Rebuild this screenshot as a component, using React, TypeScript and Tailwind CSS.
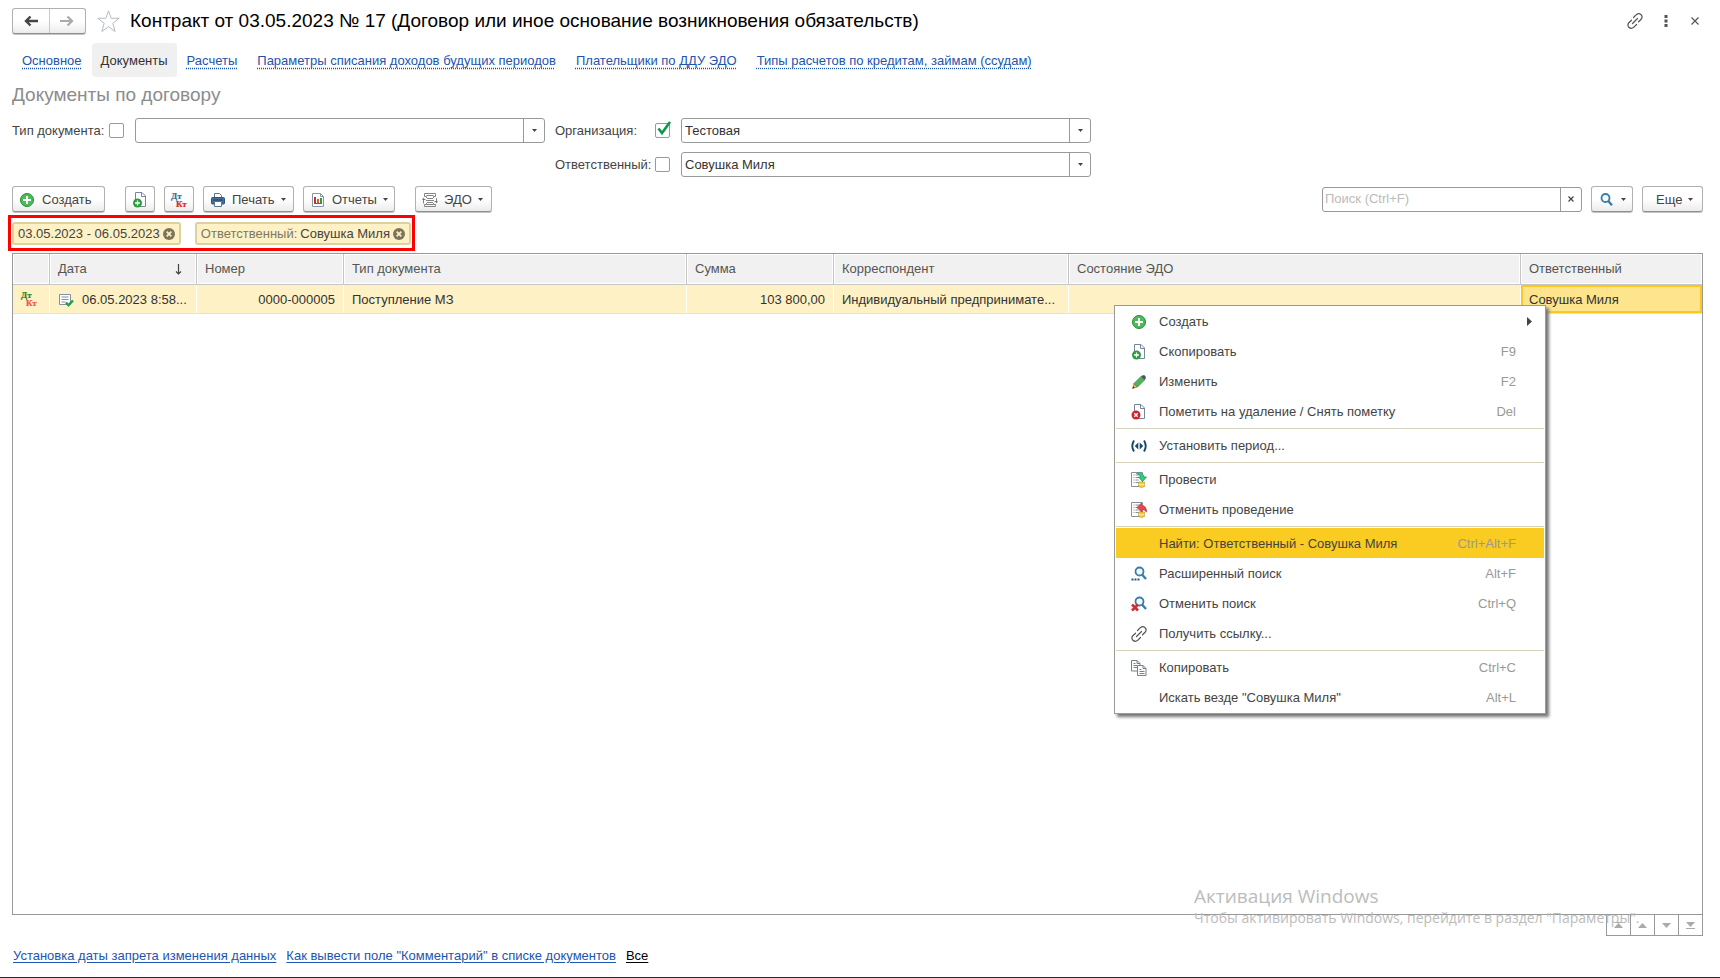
import React from 'react';

const CreateIcon = () => (
  <svg className="h-4 w-4 shrink-0" viewBox="0 0 16 16">
    <circle cx="8" cy="8" r="6.5" fill="#4dbb5a" stroke="#1f8f35" />
    <path d="M8 4v8M4 8h8" stroke="#fff" strokeWidth="2" />
  </svg>
);

const PageShape = () => (
  <path d="M3.5 .5H10l3.5 3.500v10.500h-10zM9.500 .5v4h4" fill="#fff" stroke="#76859a" />
);

const CopyDocIcon = () => (
  <svg className="h-4 w-4 shrink-0" viewBox="0 0 16 16">
    <PageShape />
    <circle cx="5.5" cy="11" r="4.5" fill="#2b9b3d" />
    <path d="M5.5 8.5v5M3 11h5" stroke="#fff" strokeWidth="1.3" />
  </svg>
);

const DeleteDocIcon = () => (
  <svg className="h-4 w-4 shrink-0" viewBox="0 0 16 16">
    <PageShape />
    <circle cx="5" cy="11" r="4.5" fill="#cf2430" />
    <path d="M3.3 9.3l3.4 3.4M6.7 9.3l-3.4 3.4" stroke="#fff" strokeWidth="1.3" />
  </svg>
);

const PencilIcon = () => (
  <svg className="h-4 w-4 shrink-0" viewBox="0 0 16 16">
    <path d="M1.5 14.5l1.5-5 3.5 3.5z" fill="#f0b354" stroke="#8a6a3a" strokeWidth=".6" />
    <path d="M1.5 14.5l.7-2.2 1.5 1.5z" fill="#333" />
    <path d="M3 9.5l7-7 3.5 3.5-7 7z" fill="#52b35c" stroke="#347f3e" strokeWidth=".7" />
    <path d="M10 2.5l1.5-1.3h2l1.2 1.3v2l-1.2 1.5z" fill="#44566a" />
  </svg>
);

const PeriodIcon = () => (
  <svg className="h-4 w-4 shrink-0" viewBox="0 0 16 16">
    <path d="M3 2.5q-3.5 5.5 0 11M13 2.5q3.5 5.5 0 11" fill="none" stroke="#16486b" strokeWidth="1.9" />
    <path d="M7.3 4.5v7l-3.5-3.5zM8.7 4.5v7l3.5-3.5z" fill="#16486b" />
  </svg>
);

const PostIcon = ({ undo }: { undo?: boolean }) => (
  <svg className="h-4 w-4 shrink-0" viewBox="0 0 16 16">
    <path d="M.5 .5h11v14H.5z" fill="#fff" stroke="#8492a0" />
    <path d="M2.5 3h1M4.5 3h4M2.5 5.5h1M4.5 5.5h4M2.5 8h1M4.5 8h3M2.5 10.5h1M4.5 10.5h3" stroke="#8492a0" />
    <path d="M7.5 10h6v4.5q-3 1.8-6 0z" fill="#f1cd4a" stroke="#b58f1e" strokeWidth=".6" />
    <path d="M7.5 12.3q3 1.4 6 0" fill="none" stroke="#fff3b0" strokeWidth=".9" />
    {undo ? (
      <path d="M6 5.5L10.5 1v2.5q5 0 5 6.5-1.5-2.7-5-2.5V10z" fill="#e84a4a" stroke="#b72a2f" strokeWidth=".7" />
    ) : (
      <path d="M5.5 1.5q7-1.5 7.5 3.5h2.5L11.5 9.5 7.5 5h2.3q-.5-2.5-4.3-3.5z" fill="#25d47c" stroke="#138f4e" strokeWidth=".7" />
    )}
  </svg>
);

const Lens = () => (
  <>
    <circle cx="8.5" cy="5.5" r="4" fill="#f4fafd" stroke="#3a7ca8" strokeWidth="1.8" />
    <path d="M11.2 8.7l3.8 4.3" stroke="#3a7ca8" strokeWidth="2.4" />
  </>
);

const AdvancedSearchIcon = () => (
  <svg className="h-4 w-4 shrink-0" viewBox="0 0 16 16">
    <Lens />
    <path d="M.5 13.5h8" stroke="#25587a" strokeWidth="2" strokeDasharray="2 1" />
  </svg>
);

const CancelSearchIcon = () => (
  <svg className="h-4 w-4 shrink-0" viewBox="0 0 16 16">
    <Lens />
    <path d="M1 8.5l6 6M7 8.5l-6 6" stroke="#d22d35" strokeWidth="2.6" />
  </svg>
);

const SearchIcon = () => (
  <svg className="h-4 w-4 shrink-0" viewBox="0 0 16 16">
    <circle cx="6.5" cy="6" r="4" fill="#f4fafd" stroke="#3a7ca8" strokeWidth="1.8" />
    <path d="M9.3 9l3.7 4.2" stroke="#3a7ca8" strokeWidth="2.4" />
  </svg>
);

const LinkIcon = () => (
  <svg className="h-4 w-4 shrink-0" viewBox="0 0 16 16" fill="none" stroke="#555" strokeWidth="1.2" strokeLinecap="round">
    <path d="M6.5 4.5l2.8-2.8q2.5-2 4.8 0 2 2.3 0 4.6L11.500 8.800" />
    <path d="M9.5 11.5l-2.8 2.8q-2.500 2-4.800 0-2-2.300 0-4.600L4.500 7.200" />
    <path d="M5.5 10.5l5-5" />
  </svg>
);

const CopyIcon = () => (
  <svg className="h-4 w-4 shrink-0" viewBox="0 0 16 16" fill="#fff" stroke="#74808c">
    <path d="M.5 .5H6l3 3V11H.5zM6 .5v3h3M2.5 3.5h2M2.5 5.5h4M2.5 7.5h4" />
    <path d="M6.5 5.5H12l3 3v7H6.5zM12 5.5v3h3M8.5 9.5h2M8.5 11.5h5M8.5 13.5h5" />
  </svg>
);

const PrintIcon = () => (
  <svg className="h-4 w-4 shrink-0" viewBox="0 0 16 16">
    <path d="M4.5 6V1.5h5l2 2V6" fill="#fff" stroke="#5d7690" />
    <rect x="1.5" y="5.5" width="13" height="6.5" rx="1" fill="#44719c" stroke="#2a527a" />
    <path d="M3 8h10" stroke="#1f3f60" />
    <path d="M4.5 9.5h7v5h-7z" fill="#fff" stroke="#5d7690" />
  </svg>
);

const ReportIcon = () => (
  <svg className="h-4 w-4 shrink-0" viewBox="0 0 16 16">
    <path d="M2.5 1.5h8l3 3v10h-11z" fill="#fff" stroke="#8796a8" />
    <path d="M10.5 1.5v3h3" fill="none" stroke="#8796a8" />
    <path d="M5 5v6" stroke="#c9302c" strokeWidth="2" />
    <path d="M8 7v4" stroke="#e0572c" strokeWidth="2" />
    <path d="M11 6v5" stroke="#2f9a3f" strokeWidth="2" />
    <path d="M4 11.5h8" stroke="#7a5b4a" />
  </svg>
);

const EdoIcon = () => (
  <svg className="h-4 w-4 shrink-0" viewBox="0 0 16 16" fill="none" stroke="#858585">
    <path d="M4.5 6V4.500h-2V1.500h11v3h-2V6M4.500 3.500h7M5 6.500h6M4 8.500h8M5 10.500h6M4.500 11v1.500h-2v2h11v-2h-2V11M4.500 12.500h7" />
    <path d="M1.500 11.500V7.500h2M14.500 6v3.500h-2" />
    <path d="M0 8l1.500-2.500L3 8zM13 9l1.500 2.500L16 9z" fill="#777" stroke="none" />
  </svg>
);

const DtKtIcon = ({ debit, credit }: { debit: string; credit: string }) => (
  <svg className="h-4 w-4 shrink-0 overflow-visible" viewBox="0 0 16 16" fontFamily="Liberation Serif, serif" fontWeight="700" fontSize="9">
    <text x="0" y="7" fill={debit} stroke={debit} strokeWidth=".2">Дт</text>
    <text x="5" y="15" fill={credit} stroke={credit} strokeWidth=".2">Кт</text>
  </svg>
);

const PostedDocIcon = () => (
  <svg className="h-4 w-4 shrink-0" viewBox="0 0 16 16">
    <path d="M1.5 2.5h11v10h-11z" fill="#fff" stroke="#8190a2" />
    <path d="M3.5 5h7M3.5 7.5h7M3.5 10h4" stroke="#8190a2" />
    <path d="M8 10.5l2.5 2.7 4.5-4.7" fill="none" stroke="#25a13b" strokeWidth="2.4" />
  </svg>
);

const Caret = () => (
  <svg className="h-[3px] w-[5px] shrink-0" viewBox="0 0 5 3">
    <path d="M0 0h5L2.5 3z" fill="#444" />
  </svg>
);

const ChipClose = ({ label }: { label: string }) => (
  <button aria-label={label}>
    <svg className="h-3 w-3" viewBox="0 0 12 12">
      <circle cx="6" cy="6" r="6" fill="#7d755a" />
      <path d="M3.7 3.7l4.6 4.6M8.3 3.7L3.7 8.3" stroke="#fdf0c4" strokeWidth="1.7" />
    </svg>
  </button>
);

type ToolButtonProps = {
  icon?: React.ReactNode;
  label?: string;
  title?: string;
  menu?: boolean;
  className: string;
};

const ToolButton: React.FC<ToolButtonProps> = ({ icon, label, title, menu, className }) => (
  <button
    aria-label={title}
    className={`flex h-[26px] items-center rounded-[3px] border border-[#b0b0b0] border-b-[#8f8f8f] bg-gradient-to-b from-white from-50% to-[#ececec] pt-px text-[#444] shadow-[0_1px_0_#c4c4c4] ${className}`}
  >
    {icon}
    {label && <span>{label}</span>}
    {menu && <Caret />}
  </button>
);

type FilterProps = {
  id: string;
  label: string;
  value: string;
  checked?: boolean;
  labelClass: string;
};

const FilterField: React.FC<FilterProps> = ({ id, label, value, checked, labelClass }) => (
  <div className="flex h-[25px] items-center">
    <label htmlFor={id} className={labelClass}>{label}</label>
    <span className="relative flex">
      <input
        type="checkbox"
        aria-label={label}
        defaultChecked={checked}
        className="peer h-[15px] w-[15px] appearance-none rounded-[2px] border border-[#999] bg-white"
      />
      <svg className="pointer-events-none absolute -top-0.5 left-0.5 hidden h-4 w-4 peer-checked:block" viewBox="0 0 16 16">
        <path d="M1.5 7.5L5 12 13 1" fill="none" stroke="#0a9a48" strokeWidth="2.6" />
      </svg>
    </span>
    <div className="relative ml-[11px] flex">
      <select id={id} defaultValue={value} className="h-[25px] w-[410px] appearance-none rounded-[3px] border border-[#999] bg-white pl-[3px] text-[#333]">
        <option>{value}</option>
      </select>
      <span className="pointer-events-none absolute inset-y-0 right-0 flex w-[22px] items-center justify-center border-l border-[#999]">
        <Caret />
      </span>
    </div>
  </div>
);

const tabs = [
  'Основное',
  'Документы',
  'Расчеты',
  'Параметры списания доходов будущих периодов',
  'Плательщики по ДДУ ЭДО',
  'Типы расчетов по кредитам, займам (ссудам)'
];

const columns = [
  { title: '', width: 'w-[37px]' },
  { title: 'Дата', width: 'w-[147px]' },
  { title: 'Номер', width: 'w-[147px]' },
  { title: 'Тип документа', width: 'w-[343px]' },
  { title: 'Сумма', width: 'w-[147px]' },
  { title: 'Корреспондент', width: 'w-[235px]' },
  { title: 'Состояние ЭДО', width: '' },
  { title: 'Ответственный', width: 'w-[181px]' }
];

type MenuItem = {
  label: string;
  icon?: React.ReactNode;
  keys?: string;
  submenu?: boolean;
  active?: boolean;
};

const menuGroups: MenuItem[][] = [
  [
    { label: 'Создать', icon: <CreateIcon />, submenu: true },
    { label: 'Скопировать', icon: <CopyDocIcon />, keys: 'F9' },
    { label: 'Изменить', icon: <PencilIcon />, keys: 'F2' },
    { label: 'Пометить на удаление / Снять пометку', icon: <DeleteDocIcon />, keys: 'Del' }
  ],
  [{ label: 'Установить период...', icon: <PeriodIcon /> }],
  [
    { label: 'Провести', icon: <PostIcon /> },
    { label: 'Отменить проведение', icon: <PostIcon undo /> }
  ],
  [
    { label: 'Найти: Ответственный - Совушка Миля', keys: 'Ctrl+Alt+F', active: true },
    { label: 'Расширенный поиск', icon: <AdvancedSearchIcon />, keys: 'Alt+F' },
    { label: 'Отменить поиск', icon: <CancelSearchIcon />, keys: 'Ctrl+Q' },
    { label: 'Получить ссылку...', icon: <LinkIcon /> }
  ],
  [
    { label: 'Копировать', icon: <CopyIcon />, keys: 'Ctrl+C' },
    { label: 'Искать везде "Совушка Миля"', keys: 'Alt+L' }
  ]
];

const ContextMenu: React.FC = () => (
  <div role="menu" className="absolute top-[51px] right-[156px] z-10 w-[432px] border border-[#999] bg-white px-px pb-px shadow-[3px_3px_3px_#777]">
    {menuGroups.map((group, index) => (
      <div key={index}>
        {index > 0 && (
          <div className="flex h-1 items-center">
            <div className="h-px w-full bg-[#d8d3bd]" />
          </div>
        )}
        {group.map((item) => (
          <button
            key={item.label}
            role="menuitem"
            className={`flex h-[30px] w-full items-center pt-px pr-[12px] pl-[15px] text-left ${item.active ? 'bg-[#facb20]' : ''}`}
          >
            <span className="w-7 shrink-0">{item.icon}</span>
            <span className="flex-1">{item.label}</span>
            <span className="text-[#999]">{item.keys}</span>
            <span className="flex w-4 shrink-0 justify-end">
              {item.submenu && (
                <svg className="h-[9px] w-[5px]" viewBox="0 0 5 9">
                  <path d="M0 0l5 4.5L0 9z" fill="#444" />
                </svg>
              )}
            </span>
          </button>
        ))}
      </div>
    ))}
  </div>
);

const scrollButtons = [
  { name: 'В начало', path: 'M0 0h9v1H0zM4.5 1L9 6H0z' },
  { name: 'Вверх', path: 'M4.5 1L9 6H0z' },
  { name: 'Вниз', path: 'M0 1h9L4.5 6z' },
  { name: 'В конец', path: 'M0 0h9L4.5 5zM0 6h9v1H0z' }
];

const cell = 'truncate border-r border-white px-2 pt-0.5';

const DocumentsTable: React.FC = () => (
  <div className="relative flex-1 border border-[#999]">
    <table className="w-full table-fixed border-separate border-spacing-0">
      <thead>
        <tr className="h-[31px]">
          {columns.map(({ title, width }) => (
            <th
              key={title || 'status'}
              className={`${width} border-r border-b border-[#c6c6c6] bg-[#f1f1f1] px-2 text-left font-normal text-[#555] shadow-[inset_0_0_0_1px_#fff] last:border-r-0`}
            >
              <span className="flex items-center justify-between">
                {title}
                {title === 'Дата' && (
                  <svg className="mr-1.5 h-[11px] w-[7px]" viewBox="0 0 7 11">
                    <path d="M3.5 0v10M1 7.5l2.5 2.5L6 7.5" fill="none" stroke="#444" strokeWidth="1.2" />
                  </svg>
                )}
              </span>
            </th>
          ))}
        </tr>
      </thead>
      <tbody>
        <tr className="h-7 bg-[#fdf1c5] text-[#333]">
          <td className="border-r border-white pl-2">
            <DtKtIcon debit="#2d7d1e" credit="#f2504a" />
          </td>
          <td className={cell}>
            <span className="flex items-center gap-2">
              <PostedDocIcon />
              <span className="truncate">06.05.2023 8:58...</span>
            </span>
          </td>
          <td className={`${cell} text-right`}>0000-000005</td>
          <td className={cell}>Поступление МЗ</td>
          <td className={`${cell} text-right`}>103 800,00</td>
          <td className={cell}>Индивидуальный предпринимате...</td>
          <td className={cell} />
          <td className="border-2 border-[#fbc91e] bg-[#fee48c] px-1.5 pt-0.5">Совушка Миля</td>
        </tr>
        <tr>
          <td colSpan={8} className="h-px bg-[#e2e2e2]" />
        </tr>
      </tbody>
    </table>
    <ContextMenu />
    <div className="absolute -right-px -bottom-[22px] flex border border-[#999] bg-white">
      {scrollButtons.map(({ name, path }) => (
        <button key={name} aria-label={name} className="flex h-5 w-6 items-center justify-center border-l border-[#999] first:w-[23px] first:border-l-0">
          <svg className="h-[7px] w-[9px]" viewBox="0 0 9 7">
            <path d={path} fill="#aaa" />
          </svg>
        </button>
      ))}
    </div>
    <div className="pointer-events-none absolute right-[53px] -bottom-[14px] w-[455px] whitespace-nowrap text-[#bcbcbc] [font-family:'Open_Sans','Noto_Sans',sans-serif]">
      <p className="text-[19px] leading-6">Активация Windows</p>
      <p className="text-[14px] leading-5">Чтобы активировать Windows, перейдите в раздел "Параметры".</p>
    </div>
  </div>
);

const App: React.FC = () => {
  return (
    <div className="flex min-h-screen flex-col border-b border-[#2b2628] bg-white pt-2 pr-[17px] pl-3 text-[13px] leading-4 text-[#444] [font-family:'Liberation_Sans',Arial,sans-serif]">
      <header className="flex h-[26px] items-center">
        <div className="flex h-[26px] w-[74px] rounded-[3px] border border-[#b0b0b0] border-b-[#8f8f8f] bg-gradient-to-b from-white from-50% to-[#ececec] shadow-[0_1px_0_#c4c4c4]">
          <button aria-label="Назад" className="flex flex-1 items-center justify-center border-r border-[#c8c8c8]">
            <svg className="h-3 w-[14px]" viewBox="0 0 14 12">
              <path d="M14 6H3M6.5 1.5L2 6l4.5 4.5" fill="none" stroke="#444" strokeWidth="2.4" />
            </svg>
          </button>
          <button aria-label="Вперед" className="flex flex-1 items-center justify-center">
            <svg className="h-3 w-[14px]" viewBox="0 0 14 12">
              <path d="M0 6h11M7.5 1.5L12 6l-4.5 4.5" fill="none" stroke="#aaa" strokeWidth="2.2" />
            </svg>
          </button>
        </div>
        <button aria-label="В избранное" className="ml-[11px]">
          <svg className="h-[23px] w-[23px]" viewBox="0 0 23 23">
            <path d="M11.5 .8l2.7 7.5h8l-6.4 5 2.3 8.2-6.6-4.8-6.6 4.8 2.3-8.2-6.4-5h8z" fill="#fff" stroke="#b5bbc2" />
          </svg>
        </button>
        <h1 className="ml-[10px] flex-1 text-[19px] leading-6 text-black">
          Контракт от 03.05.2023 № 17 (Договор или иное основание возникновения обязательств)
        </h1>
        <div className="flex items-center gap-[18px] pr-[4px]">
          <button aria-label="Получить ссылку"><LinkIcon /></button>
          <button aria-label="Меню">
            <svg className="h-3 w-3" viewBox="0 0 12 12">
              <path d="M3.500 0h3v3h-3zM3.500 4.500h3v3h-3zM3.500 9h3v3h-3z" fill="#555" />
            </svg>
          </button>
          <button aria-label="Закрыть">
            <svg className="h-2 w-2" viewBox="0 0 8 8">
              <path d="M.5 .5l7 7M7.5 .5l-7 7" stroke="#555" strokeWidth="1.2" />
            </svg>
          </button>
        </div>
      </header>

      <nav className="mt-[9px] flex h-[34px]">
        {tabs.map((tab) =>
          tab === 'Документы' ? (
            <a key={tab} href="#" className="flex items-center rounded-[4px] bg-[#f0f0f0] px-[9px] pt-0.5 text-[#333]">
              {tab}
            </a>
          ) : (
            <a key={tab} href="#" className="flex items-center px-[10px] pt-0.5 text-[#1c55ae] underline decoration-dotted underline-offset-3">
              {tab}
            </a>
          )
        )}
      </nav>

      <h2 className="mt-[6px] text-[19px] leading-6 text-[#8c8c8c]">Документы по договору</h2>

      <div className="mt-[11px] flex gap-[10px]">
        <FilterField id="doc-type" label="Тип документа:" value="" labelClass="w-[97px]" />
        <div className="flex flex-col gap-[9px]">
          <FilterField id="organization" label="Организация:" value="Тестовая" checked labelClass="w-[100px]" />
          <FilterField id="responsible" label="Ответственный:" value="Совушка Миля" labelClass="w-[100px]" />
        </div>
      </div>

      <div className="mt-[9px] flex items-center">
        <ToolButton icon={<CreateIcon />} label="Создать" className="w-[93px] gap-[7px] pl-[6px]" />
        <ToolButton icon={<CopyDocIcon />} title="Скопировать" className="ml-5 w-[30px] justify-center" />
        <ToolButton icon={<DtKtIcon debit="#2d6f9e" credit="#cc2a1c" />} title="Проводки" className="ml-[9px] w-[30px] justify-center" />
        <ToolButton icon={<PrintIcon />} label="Печать" menu className="ml-[9px] w-[91px] gap-[6px] pl-[6px]" />
        <ToolButton icon={<ReportIcon />} label="Отчеты" menu className="ml-[9px] w-[92px] gap-[6px] pl-[6px]" />
        <ToolButton icon={<EdoIcon />} label="ЭДО" menu className="ml-5 w-[77px] gap-[6px] pl-[6px]" />

        <div className="ml-auto flex h-[25px] w-[260px] rounded-[3px] border border-[#999]">
          <input type="text" aria-label="Поиск" placeholder="Поиск (Ctrl+F)" className="min-w-0 flex-1 pl-[2px] outline-none placeholder:text-[#bbb]" />
          <button aria-label="Очистить" className="flex w-[21px] items-center justify-center border-l border-[#999]">
            <svg className="h-[6px] w-[6px]" viewBox="0 0 6 6">
              <path d="M.5 .5l5 5M5.5 .5l-5 5" stroke="#444" strokeWidth="1.2" />
            </svg>
          </button>
        </div>
        <ToolButton icon={<SearchIcon />} title="Найти" menu className="ml-[9px] w-[42px] justify-center gap-[6px]" />
        <ToolButton label="Еще" menu className="ml-[9px] w-[61px] gap-[6px] pl-[13px]" />
      </div>

      <div className="mt-[3px] -ml-1 flex h-9 w-[407px] items-center justify-between border-3 border-[#fe0000] px-px">
        <div className="flex h-[23px] items-center gap-[3px] rounded-[3px] border-2 border-[#ddd0a4] bg-[#fdf1c5] px-1 pt-px">
          <span>03.05.2023 - 06.05.2023</span>
          <ChipClose label="Сбросить период" />
        </div>
        <div className="flex h-[23px] items-center gap-[3px] rounded-[3px] border-2 border-[#ddd0a4] bg-[#fdf1c5] px-1 pt-px">
          <span className="text-[#7d7865]">Ответственный:</span>
          <span>Совушка Миля</span>
          <ChipClose label="Сбросить ответственного" />
        </div>
      </div>

      <div className="mt-[2px] flex flex-1 flex-col">
        <DocumentsTable />
      </div>

      <footer className="mt-[33px] mb-[13px] flex gap-[10px] pl-px text-[#1c55ae]">
        <a href="#" className="underline underline-offset-2">Установка даты запрета изменения данных</a>
        <a href="#" className="underline underline-offset-2">Как вывести поле "Комментарий" в списке документов</a>
        <a href="#" className="text-black underline underline-offset-2">Все</a>
      </footer>
    </div>
  );
};

export default App;
